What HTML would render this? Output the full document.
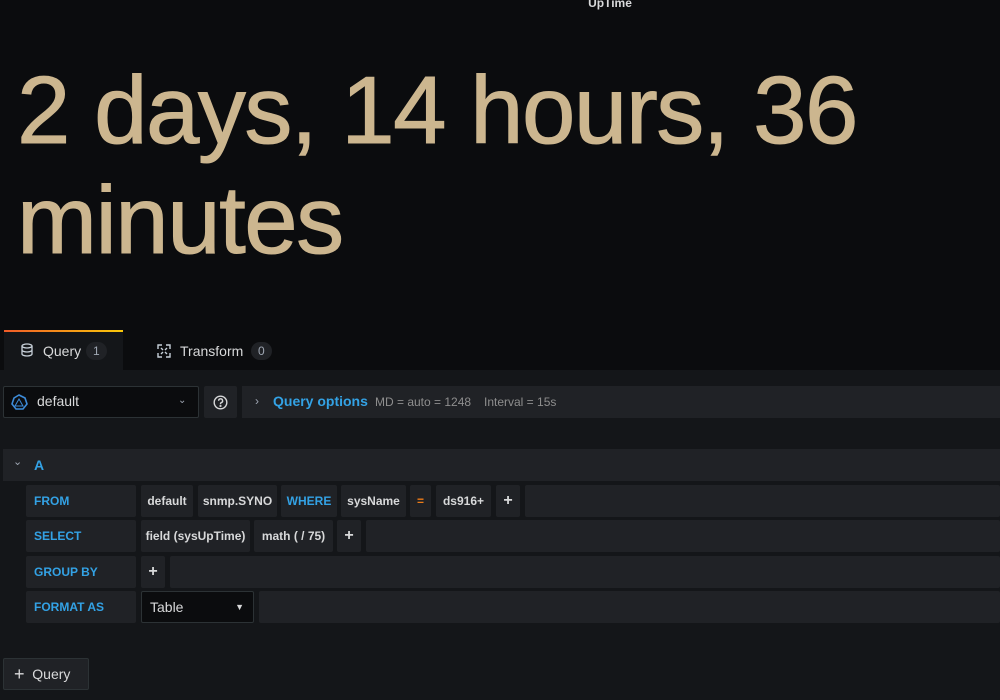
<!DOCTYPE html>
<html><head><style>
*{box-sizing:border-box;margin:0;padding:0}
body{width:1000px;height:700px;overflow:hidden;background:#0b0c0e;font-family:"Liberation Sans",sans-serif;position:relative;color:#d8d9da}
.a{position:absolute}
.title{left:0;width:1220px;text-align:center;top:-4px;font-size:12px;font-weight:bold;color:#d8d9da}
.big{left:17px;top:56px;font-size:96px;line-height:110px;color:#ccb68f;letter-spacing:-1.5px;white-space:nowrap;-webkit-text-stroke:1px #ccb68f}
.panel{left:0;top:370px;width:1000px;height:330px;background:#141619}
.tab{left:4px;top:330px;width:119px;height:41px;background:#141619;border-top:2px solid;border-image:linear-gradient(90deg,#f05a28,#fbca0a) 1}
.badge{display:inline-block;background:#202226;border-radius:10px;padding:2px 7px;font-size:12px;color:#9fa7b3}
.box{background:#202226;border-radius:2px;height:32px;font-size:12px;font-weight:bold;line-height:32px;color:#d8d9da;text-align:center;white-space:nowrap}
.lab{text-align:left;padding-left:8px}
.kw{color:#33a2e5}
</style></head><body>
<div class="a title">UpTime</div>
<div class="a big">2 days, 14 hours, 36<br>minutes</div>
<div class="a panel"></div>
<div class="a tab"></div>
<svg class="a" style="left:20px;top:343px" width="14" height="14" viewBox="0 0 14 14" fill="none" stroke="#c7d0d9" stroke-width="1.3"><ellipse cx="7" cy="3" rx="5" ry="2"/><path d="M2 3v8c0 1.1 2.2 2 5 2s5-.9 5-2V3M2 7c0 1.1 2.2 2 5 2s5-.9 5-2"/></svg>
<div class="a" style="left:43px;top:343px;font-size:14px;color:#d8d9da">Query</div>
<div class="a badge" style="left:86px;top:342px">1</div>
<svg class="a" style="left:157px;top:344px" width="14" height="14" viewBox="0 0 14 14" fill="none" stroke="#c7d0d9" stroke-width="1.4"><path d="M1 5V1h4M9 1h4v4M13 9v4H9M5 13H1V9M4 4l2 2M10 4 8 6M10 10 8 8M4 10l2-2"/></svg>
<div class="a" style="left:180px;top:343px;font-size:14px;color:#d8d9da">Transform</div>
<div class="a badge" style="left:251px;top:342px">0</div>
<div class="a" style="left:3px;top:386px;width:196px;height:32px;background:#0b0c0e;border:1px solid #2c3235;border-radius:2px"></div>
<svg class="a" style="left:11px;top:394px" width="17" height="17" viewBox="0 0 17 17" fill="none" stroke="#3d8bd8" stroke-width="1.6"><path d="M8 1l6 3 2 6-4 5H5L1 10l2-6z"/><path d="M8 5l-4 7h8z" stroke-width="1"/></svg>
<div class="a" style="left:37px;top:393px;font-size:14px;color:#d8d9da">default</div>
<div class="a" style="left:178px;top:395px;font-size:10px;color:#9fa7b3">&#8964;</div>
<div class="a" style="left:204px;top:386px;width:33px;height:32px;background:#202226;border-radius:2px"></div>
<svg class="a" style="left:213px;top:395px" width="15" height="15" viewBox="0 0 15 15" fill="none" stroke="#d8d9da" stroke-width="1.4"><circle cx="7.5" cy="7.5" r="6.3"/><path d="M5.6 5.8a2 2 0 1 1 2.6 1.9c-.5.2-.7.6-.7 1.1v.5"/><circle cx="7.5" cy="11" r=".4" fill="#d8d9da"/></svg>
<div class="a" style="left:242px;top:386px;width:758px;height:32px;background:#202226"></div>
<div class="a" style="left:255px;top:394px;font-size:12px;color:#9fa7b3">&#8250;</div>
<div class="a" style="left:273px;top:393px;font-size:14px;font-weight:bold;color:#33a2e5">Query options</div>
<div class="a" style="left:375px;top:395px;font-size:12px;color:#8e8e8e">MD = auto = 1248</div>
<div class="a" style="left:484px;top:395px;font-size:12px;color:#8e8e8e">Interval = 15s</div>
<div class="a" style="left:3px;top:449px;width:997px;height:32px;background:#202226"></div>
<div class="a" style="left:13px;top:455px;font-size:11px;color:#9fa7b3">&#8964;</div>
<div class="a" style="left:34px;top:457px;font-size:14px;font-weight:bold;color:#33a2e5">A</div>
<div class="a box kw lab" style="left:26px;top:485px;width:110px">FROM</div>
<div class="a box" style="left:141px;top:485px;width:52px">default</div>
<div class="a box" style="left:198px;top:485px;width:79px">snmp.SYNO</div>
<div class="a box kw" style="left:281px;top:485px;width:56px">WHERE</div>
<div class="a box" style="left:341px;top:485px;width:65px">sysName</div>
<div class="a box" style="left:410px;top:485px;width:21px;color:#eb7b18">=</div>
<div class="a box" style="left:436px;top:485px;width:55px">ds916+</div>
<div class="a box" style="left:496px;top:485px;width:24px;font-size:16px">+</div>
<div class="a box" style="left:525px;top:485px;width:475px"></div>
<div class="a box kw lab" style="left:26px;top:520px;width:110px">SELECT</div>
<div class="a box" style="left:141px;top:520px;width:109px">field (sysUpTime)</div>
<div class="a box" style="left:254px;top:520px;width:79px">math ( / 75)</div>
<div class="a box" style="left:337px;top:520px;width:24px;font-size:16px">+</div>
<div class="a box" style="left:366px;top:520px;width:634px"></div>
<div class="a box kw lab" style="left:26px;top:556px;width:110px">GROUP BY</div>
<div class="a box" style="left:141px;top:556px;width:24px;font-size:16px">+</div>
<div class="a box" style="left:170px;top:556px;width:830px"></div>
<div class="a box kw lab" style="left:26px;top:591px;width:110px">FORMAT AS</div>
<div class="a" style="left:141px;top:591px;width:113px;height:32px;background:#0b0c0e;border:1px solid #2c3235;border-radius:2px;font-size:14px;line-height:30px;padding-left:8px;color:#d8d9da">Table<span style="position:absolute;right:9px;top:0;font-size:9px">&#9660;</span></div>
<div class="a box" style="left:259px;top:591px;width:741px"></div>
<div class="a" style="left:3px;top:658px;width:86px;height:32px;background:#202226;border:1px solid #2c3235;border-radius:2px;font-size:14px;line-height:30px;padding-left:10px;color:#d8d9da"><span style="font-size:18px;vertical-align:-1px">+</span>&nbsp; Query</div>
</body></html>
